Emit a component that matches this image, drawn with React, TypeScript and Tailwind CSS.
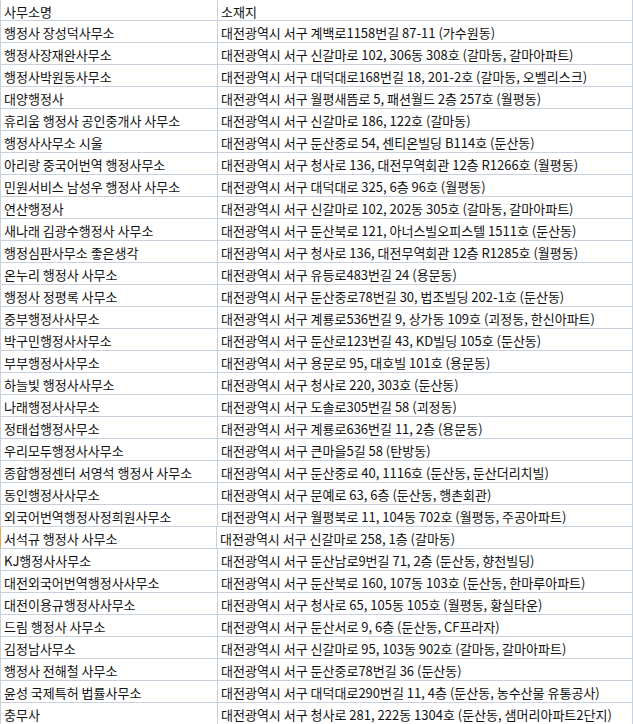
const offices: [string, string][] = [
  ["행정사 장성덕사무소", "대전광역시 서구 계백로1158번길 87-11 (가수원동)"],
  ["행정사장재완사무소", "대전광역시 서구 신갈마로 102, 306동 308호 (갈마동, 갈마아파트)"],
  ["행정사박원동사무소", "대전광역시 서구 대덕대로168번길 18, 201-2호 (갈마동, 오벨리스크)"],
  ["대양행정사", "대전광역시 서구 월평새뜸로 5, 패션월드 2층 257호 (월평동)"],
  ["휴리움 행정사 공인중개사 사무소", "대전광역시 서구 신갈마로 186, 122호 (갈마동)"],
  ["행정사사무소 시울", "대전광역시 서구 둔산중로 54, 센티온빌딩 B114호 (둔산동)"],
  ["아리랑 중국어번역 행정사무소", "대전광역시 서구 청사로 136, 대전무역회관 12층 R1266호 (월평동)"],
  ["민원서비스 남성우 행정사 사무소", "대전광역시 서구 대덕대로 325, 6층 96호 (월평동)"],
  ["연산행정사", "대전광역시 서구 신갈마로 102, 202동 305호 (갈마동, 갈마아파트)"],
  ["새나래 김광수행정사 사무소", "대전광역시 서구 둔산북로 121, 아너스빌오피스텔 1511호 (둔산동)"],
  ["행정심판사무소 좋은생각", "대전광역시 서구 청사로 136, 대전무역회관 12층 R1285호 (월평동)"],
  ["온누리 행정사 사무소", "대전광역시 서구 유등로483번길 24 (용문동)"],
  ["행정사 정평록 사무소", "대전광역시 서구 둔산중로78번길 30, 법조빌딩 202-1호 (둔산동)"],
  ["중부행정사사무소", "대전광역시 서구 계룡로536번길 9, 상가동 109호 (괴정동, 한신아파트)"],
  ["박구민행정사사무소", "대전광역시 서구 둔산로123번길 43, KD빌딩 105호 (둔산동)"],
  ["부부행정사사무소", "대전광역시 서구 용문로 95, 대호빌 101호 (용문동)"],
  ["하늘빛 행정사사무소", "대전광역시 서구 청사로 220, 303호 (둔산동)"],
  ["나래행정사사무소", "대전광역시 서구 도솔로305번길 58 (괴정동)"],
  ["정태섭행정사무소", "대전광역시 서구 계룡로636번길 11, 2층 (용문동)"],
  ["우리모두행정사사무소", "대전광역시 서구 큰마을5길 58 (탄방동)"],
  ["종합행정센터 서영석 행정사 사무소", "대전광역시 서구 둔산중로 40, 1116호 (둔산동, 둔산더리치빌)"],
  ["동인행정사사무소", "대전광역시 서구 문예로 63, 6층 (둔산동, 행촌회관)"],
  ["외국어번역행정사정희원사무소", "대전광역시 서구 월평북로 11, 104동 702호 (월평동, 주공아파트)"],
  ["서석규 행정사 사무소", "대전광역시 서구 신갈마로 258, 1층 (갈마동)"],
  ["KJ행정사사무소", "대전광역시 서구 둔산남로9번길 71, 2층 (둔산동, 향천빌딩)"],
  ["대전외국어번역행정사사무소", "대전광역시 서구 둔산북로 160, 107동 103호 (둔산동, 한마루아파트)"],
  ["대전이용규행정사사무소", "대전광역시 서구 청사로 65, 105동 105호 (월평동, 황실타운)"],
  ["드림 행정사 사무소", "대전광역시 서구 둔산서로 9, 6층 (둔산동, CF프라자)"],
  ["김정남사무소", "대전광역시 서구 신갈마로 95, 103동 902호 (갈마동, 갈마아파트)"],
  ["행정사 전해철 사무소", "대전광역시 서구 둔산중로78번길 36 (둔산동)"],
  ["윤성 국제특허 법률사무소", "대전광역시 서구 대덕대로290번길 11, 4층 (둔산동, 농수산물 유통공사)"],
  ["충무사", "대전광역시 서구 청사로 281, 222동 1304호 (둔산동, 샘머리아파트2단지)"],
];

const row = "flex border-b border-[#c9d1dd]";
const nameCell = "flex w-[217px] shrink-0 items-center border-r border-[#c9d1dd] pl-[3px] pt-[2px] whitespace-nowrap";
const addrCell = "flex min-w-0 flex-1 items-center pl-[3px] pt-[2px] whitespace-nowrap";

export default function App() {
  return (
    <div className="h-[724px] overflow-hidden bg-white font-['Noto_Sans_CJK_KR',sans-serif] text-[13px] leading-none text-[#111]">
      <div className="w-[633px] border-x border-[#c9d1dd]">
        <div className={`${row} h-[21px]`}>
          <div className={nameCell}>사무소명</div>
          <div className={addrCell}>소재지</div>
        </div>
        {offices.map(([name, addr]) => (
          <div key={name} className={`${row} h-[22px]`}>
            {/* the selected row keeps an orange mark on its left edge */}
            <div className={`${nameCell} ${name === "서석규 행정사 사무소" ? "-ml-px border-l border-l-[#f0a44a]" : ""}`}>
              {name}
            </div>
            <div className={addrCell}>{addr}</div>
          </div>
        ))}
      </div>
    </div>
  );
}
